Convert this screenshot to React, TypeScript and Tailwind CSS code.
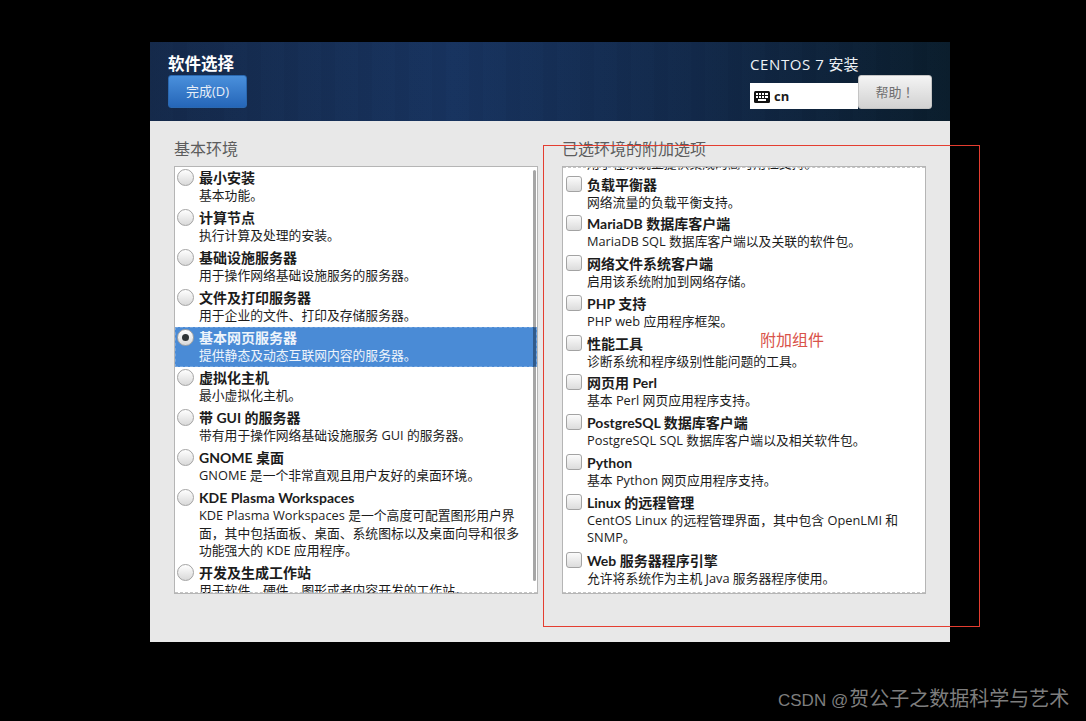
import { ReactNode } from "react";

const cjk = "font-['Open_Sans','Noto_Sans_CJK_SC',sans-serif]";

type Item = { title: string; desc: string[]; selected?: boolean; gap?: string };

const environments: Item[] = [
  { title: "最小安装", desc: ["基本功能。"] },
  { title: "计算节点", desc: ["执行计算及处理的安装。"] },
  { title: "基础设施服务器", desc: ["用于操作网络基础设施服务的服务器。"] },
  { title: "文件及打印服务器", desc: ["用于企业的文件、打印及存储服务器。"] },
  { title: "基本网页服务器", desc: ["提供静态及动态互联网内容的服务器。"], selected: true },
  { title: "虚拟化主机", desc: ["最小虚拟化主机。"] },
  { title: "带 GUI 的服务器", desc: ["带有用于操作网络基础设施服务 GUI 的服务器。"] },
  { title: "GNOME 桌面", desc: ["GNOME 是一个非常直观且用户友好的桌面环境。"] },
  {
    title: "KDE Plasma Workspaces",
    desc: [
      "KDE Plasma Workspaces 是一个高度可配置图形用户界",
      "面，其中包括面板、桌面、系统图标以及桌面向导和很多",
      "功能强大的 KDE 应用程序。",
    ],
  },
  { title: "开发及生成工作站", desc: ["用于软件、硬件、图形或者内容开发的工作站。"] },
];

const addons: Item[] = [
  { title: "负载平衡器", desc: ["网络流量的负载平衡支持。"] },
  { title: "MariaDB 数据库客户端", desc: ["MariaDB SQL 数据库客户端以及关联的软件包。"] },
  { title: "网络文件系统客户端", desc: ["启用该系统附加到网络存储。"] },
  { title: "PHP 支持", desc: ["PHP web 应用程序框架。"] },
  { title: "性能工具", desc: ["诊断系统和程序级别性能问题的工具。"] },
  { title: "网页用 Perl", desc: ["基本 Perl 网页应用程序支持。"] },
  { title: "PostgreSQL 数据库客户端", desc: ["PostgreSQL SQL 数据库客户端以及相关软件包。"] },
  { title: "Python", desc: ["基本 Python 网页应用程序支持。"] },
  {
    title: "Linux 的远程管理",
    desc: ["CentOS Linux 的远程管理界面，其中包含 OpenLMI 和", "SNMP。"],
    gap: "mb-[1.5px]",
  },
  { title: "Web 服务器程序引擎", desc: ["允许将系统作为主机 Java 服务器程序使用。"] },
];

function Radio({ checked }: { checked?: boolean }) {
  return (
    <div className="w-[17px] h-[17px] shrink-0 rounded-full border border-[#a3a3a3] bg-gradient-to-b from-[#ffffff] to-[#d9d9d9] flex items-center justify-center">
      {checked && <div className="w-[7px] h-[7px] rounded-full bg-[#2e3436]" />}
    </div>
  );
}

function Checkbox() {
  return (
    <div className="w-[16px] h-[16px] shrink-0 rounded-[3px] border border-[#a3a3a3] bg-gradient-to-b from-[#fbfbfb] to-[#dcdcdc]" />
  );
}

function Row({ item, control, pad }: { item: Item; control: ReactNode; pad: string }) {
  return (
    <div
      className={`flex pt-[1px] ${pad} ${item.gap ?? ""} ${
        item.selected
          ? "bg-[#4a8bd6] text-[#eef4fb] outline-1 outline-dashed -outline-offset-1 outline-[#74a6e0]"
          : "text-[#1c1c1c]"
      }`}
    >
      <div className="w-[24px] pl-[2px] pt-[1px] shrink-0">{control}</div>
      <div className="min-w-0">
        <div className="text-[14px] leading-[19px] font-bold whitespace-nowrap font-['Lato','Noto_Sans_CJK_SC',sans-serif]">
          {item.title}
        </div>
        {item.desc.map((line) => (
          <div key={line} className="text-[12.8px] leading-[17.5px] whitespace-nowrap">
            {line}
          </div>
        ))}
      </div>
    </div>
  );
}

function Dashes({ className }: { className: string }) {
  return <div className={`absolute left-0 right-0 border-t border-dashed border-[#c4c4c4] ${className}`} />;
}

export default function App() {
  return (
    <div className={`relative w-[1086px] h-[721px] bg-black overflow-hidden pt-[42px] pl-[150px] ${cjk}`}>
      <div className="w-[800px] h-[600px] bg-[#e8e8e8] flex flex-col">
        {/* Header */}
        <div className="h-[79px] shrink-0 flex justify-between bg-[repeating-linear-gradient(90deg,rgba(255,255,255,0.004)_0px,rgba(255,255,255,0.004)_23px,rgba(0,0,0,0.018)_23px,rgba(0,0,0,0.018)_37px),linear-gradient(90deg,#14294a_0%,#17335f_38%,#12294a_68%,#0a1d2c_100%)]">
          <div className="pl-[18px] pt-[11px]">
            <div className="text-[16.5px] leading-[22px] font-bold text-white">软件选择</div>
            <button className="w-[79px] h-[33px] rounded-[3px] border border-[#2a68b0] bg-gradient-to-b from-[#4a90dc] to-[#2566b8] text-[#e6eef8] text-[13px]">
              完成(D)
            </button>
          </div>
          <div className="pr-[18px] pt-[12px] w-[200px]">
            <div className="text-[15px] leading-[20px] text-[#eef2f6] whitespace-nowrap">
              <span className="tracking-[0.6px]">CENTOS 7</span> 安装
            </div>
            <div className="flex items-end mt-[1px]">
              <div className="w-[108px] h-[26px] bg-white flex items-center pl-[4px] pt-[1px] gap-[4px]">
                <svg width="16" height="12" viewBox="0 0 16 12">
                  <rect width="16" height="12" rx="1.5" fill="#111" />
                  <g fill="#fff">
                    <rect x="2" y="2" width="2" height="2" />
                    <rect x="5" y="2" width="2" height="2" />
                    <rect x="8" y="2" width="2" height="2" />
                    <rect x="11" y="2" width="3" height="2" />
                    <rect x="2" y="5" width="2" height="2" />
                    <rect x="5" y="5" width="2" height="2" />
                    <rect x="8" y="5" width="2" height="2" />
                    <rect x="11" y="5" width="3" height="2" />
                    <rect x="4" y="8" width="8" height="2" />
                  </g>
                </svg>
                <span className="text-[13px] font-bold text-[#1c1c1c]">cn</span>
              </div>
              <button className="w-[74px] h-[34px] rounded-[3px] border border-[#c4c4c4] bg-gradient-to-b from-[#f4f4f4] to-[#d2d2d2] text-[#6e6e6e] text-[13px] font-['Noto_Sans_CJK_TC',sans-serif]">
                帮助！
              </button>
            </div>
          </div>
        </div>

        {/* Body */}
        <div className="flex gap-[24px] pl-[24px] pt-[17px]">
          <Panel title="基本环境" dashedTop={false}>
            {environments.map((item) => (
              <Row
                key={item.title}
                item={item}
                pad="pb-[2.5px]"
                control={<Radio checked={item.selected} />}
              />
            ))}
            <div className="absolute top-[3px] right-[1px] w-[3px] h-[411px] rounded-full bg-black/35" />
          </Panel>
          <Panel title="已选环境的附加选项" dashedTop>
            <div className="-mt-[15px] h-[21.5px] pl-[24px] text-[12.8px] leading-[22px] text-[#1c1c1c] whitespace-nowrap">
              用于在系统上提供集成的高可用性支持。
            </div>
            {addons.map((item) => (
              <Row
                key={item.title}
                item={item}
                pad="pb-[2.25px]"
                control={
                  <div className="pl-[1px]">
                    <Checkbox />
                  </div>
                }
              />
            ))}
          </Panel>
        </div>
      </div>

      {/* Annotation and watermark, pasted over the screenshot */}
      <div className="absolute left-[543px] top-[145px] w-[437px] h-[482px] border border-[#e43d30]" />
      <div className="absolute left-[760px] top-[329px] text-[16px] leading-[22px] text-[#d9534a]">附加组件</div>
      <div className="absolute left-[778px] top-[686px] flex items-baseline gap-[6px] leading-[26px] text-[#7e7e7e] whitespace-nowrap font-['Liberation_Sans','Noto_Sans_CJK_SC',sans-serif]">
        <span className="text-[17px]">CSDN @</span>
        <span className="text-[20px] -ml-[5px]">贺公子之数据科学与艺术</span>
      </div>
    </div>
  );
}

function Panel({ title, dashedTop, children }: { title: string; dashedTop: boolean; children: ReactNode }) {
  return (
    <div className="w-[364px]">
      <div className="text-[16px] leading-[22px] text-[#5c5c5c] mb-[6px]">{title}</div>
      <div className="relative h-[428px] bg-white border border-[#b5b5b5] overflow-hidden">
        {children}
        {dashedTop && <Dashes className="top-0" />}
        <Dashes className="bottom-0" />
      </div>
    </div>
  );
}
